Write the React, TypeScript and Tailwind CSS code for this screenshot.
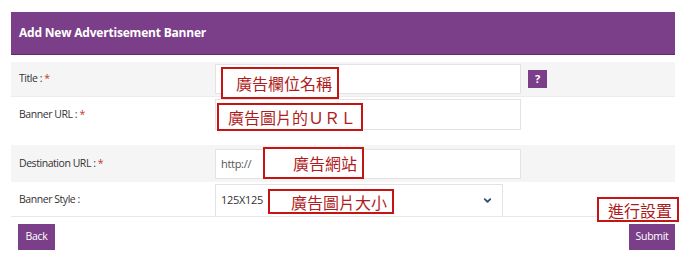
import { ChevronDown } from 'lucide-react'

const labelCls = 'w-[204px] shrink-0 pl-2 text-[10.5px] tracking-[-0.45px] text-[#333]'
const inputCls = 'h-[30px] w-[306px] border border-[#e3e3e3] bg-white px-[5px] text-[11px] tracking-[-0.3px] text-[#555] outline-none'
const btnCls = 'flex h-[26px] items-center justify-center bg-[#7a3f88] text-[10.5px] tracking-[-0.3px] text-white'

function Req() {
  return <span className="text-[#c0392b]">*</span>
}

// red annotation overlays drawn on the screenshot
const notes = [
  { text: '廣告欄位名稱', cls: 'left-[221px] top-[67px] w-[118px] h-[32px]' },
  { text: '廣告圖片的ＵＲＬ', cls: 'left-[217px] top-[103px] w-[146px] h-[28px]' },
  { text: '廣告網站', cls: 'left-[263px] top-[147px] w-[101px] h-[32px]' },
  { text: '廣告圖片大小', cls: 'left-[268px] top-[189px] w-[126px] h-[25px]' },
  { text: '進行設置', cls: 'left-[597px] top-[197px] w-[82px] h-[25px]' },
]

export default function App() {
  return (
    <div className="relative h-[260px] w-[690px] overflow-hidden bg-white font-['Open_Sans',sans-serif]">
      <div className="ml-[11px] w-[664px] pt-[12px]">
        <div className="flex h-[43px] items-center border-b border-[#5e2c6b] bg-[#7a3f88] pl-2">
          <h2 className="text-[12px] font-bold tracking-[-0.2px] text-white">Add New Advertisement Banner</h2>
        </div>

        <div className="mt-[7px]">
          <div className="flex h-[35px] items-center border-b border-[#ececec] bg-[#f5f5f5]">
            <label className={labelCls}>Title : <Req /></label>
            <input className={inputCls} defaultValue="" />
            <button className="ml-[7px] flex h-[18px] w-[19px] items-center justify-center bg-[#7a3f88] text-[11px] font-bold text-white">?</button>
          </div>

          <div className="flex h-[48px] items-start pt-[2px]">
            <label className={`${labelCls} pt-[8px]`}>Banner URL : <Req /></label>
            <input className={`${inputCls} h-[31px]`} defaultValue="" />
          </div>

          <div className="flex h-[37px] items-center bg-[#f5f5f5]">
            <label className={labelCls}>Destination URL : <Req /></label>
            <input className={inputCls} defaultValue="http://" />
          </div>

          <div className="flex h-[35px] items-start border-b border-[#e8e8e8] pt-[2px]">
            <label className={`${labelCls} pt-[8px]`}>Banner Style :</label>
            <div className="flex h-[32px] w-[288px] items-center justify-between border-l border-r border-t border-[#e3e3e3] px-[5px] text-[11px] tracking-[-0.3px] text-[#333]">
              <span>125X125</span>
              <ChevronDown size={11} strokeWidth={4} className="mr-[4px] text-[#2d4f6e]" />
            </div>
          </div>
        </div>

        <div className="mt-[7px] flex items-center justify-between pl-[7px]">
          <button className={`${btnCls} w-[37px]`}>Back</button>
          <button className={`${btnCls} w-[46px]`}>Submit</button>
        </div>
      </div>

      {notes.map(n => (
        <div
          key={n.text}
          className={`absolute ${n.cls} flex items-center justify-end border-2 border-[#c41414] bg-white pr-[5px] font-['Noto_Sans_CJK_TC',sans-serif] text-[16px] leading-none text-[#b01c1c]`}
        >
          {n.text}
        </div>
      ))}
    </div>
  )
}
